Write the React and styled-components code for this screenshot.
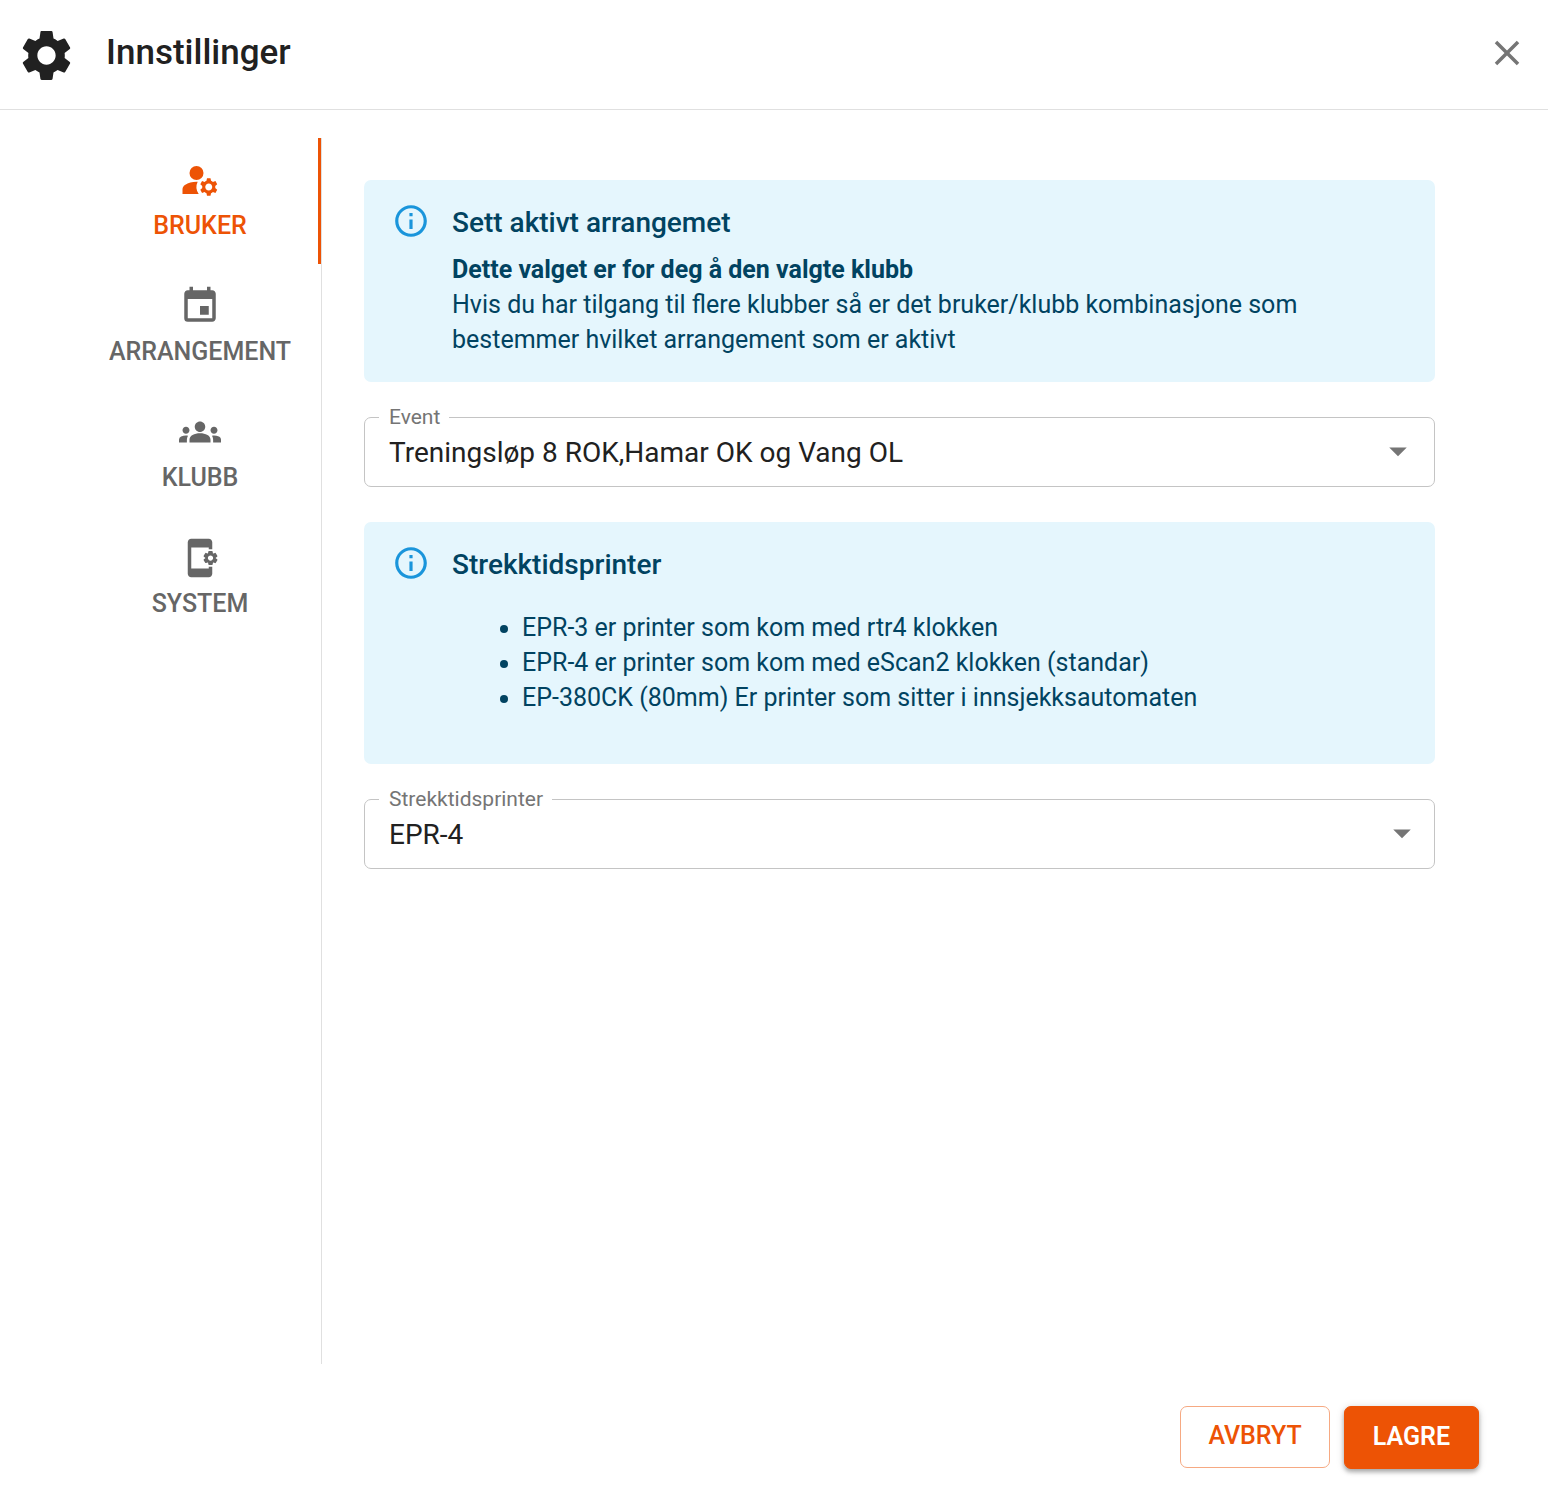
import React, { useState } from "react";
import styled, { createGlobalStyle } from "styled-components";
import {
  MdAppSettingsAlt,
  MdArrowDropDown,
  MdClose,
  MdEvent,
  MdGroups,
  MdInfoOutline,
  MdManageAccounts,
  MdSettings,
} from "react-icons/md";

const GlobalStyle = createGlobalStyle`
  *, *::before, *::after { box-sizing: border-box; }
  body {
    margin: 0;
    background: #fff;
    color: #212121;
    font-family: Roboto, "Liberation Sans", sans-serif;
    font-size: 25px;
    line-height: 35px;
  }
  button, select { font-family: inherit; }
`;

const Dialog = styled.div`
  display: flex;
  flex-direction: column;
  min-height: 100vh;
`;

const Header = styled.header`
  display: flex;
  align-items: center;
  height: 110px;
  padding: 0 20px 3px 16px;
  border-bottom: 1px solid #e0e0e0;
`;

const HeaderIcon = styled(MdSettings)`
  flex: none;
  margin-top: 5px;
  font-size: 61px;
`;

const Title = styled.h1`
  flex: 1;
  margin: 0 0 0 29px;
  font-size: 35px;
  font-weight: 500;
  line-height: 56px;
`;

const CloseButton = styled.button`
  display: flex;
  padding: 0;
  border: 0;
  background: none;
  color: #757575;
  font-size: 42px;
  cursor: pointer;
`;

const Body = styled.div`
  display: flex;
  flex: 1;
  padding: 28px 113px 0 79px;
`;

const Tabs = styled.nav`
  display: flex;
  flex: none;
  flex-direction: column;
  width: 243px;
  border-right: 1px solid #e0e0e0;
`;

const Tab = styled.button`
  display: flex;
  flex-direction: column;
  align-items: center;
  gap: 10px;
  height: 126px;
  padding: 21px 0;
  border: 0;
  background: none;
  box-shadow: ${({ $active }) => ($active ? "inset -3px 0 #ed5305" : "none")};
  color: ${({ $active }) => ($active ? "#ed5305" : "#666")};
  font-size: 25px;
  font-weight: 500;
  line-height: 30px;
  text-transform: uppercase;
  cursor: pointer;

  svg { font-size: 42px; }
`;

const Panel = styled.main`
  display: flex;
  flex: 1;
  flex-direction: column;
  gap: 35px;
  min-width: 0;
  padding: 42px 0 42px 42px;
`;

const Alert = styled.section`
  display: flex;
  gap: 22px;
  padding: 21px 28px 25px;
  border-radius: 7px;
  background: #e5f6fd;
  color: #014361;
`;

const AlertIcon = styled(MdInfoOutline)`
  flex: none;
  margin-top: 1px;
  color: #1a95db;
  font-size: 38px;
`;

const AlertTitle = styled.h2`
  margin: 0 0 7px;
  font-size: 28px;
  font-weight: 500;
  line-height: 44px;
`;

const AlertText = styled.p`
  margin: 0;
`;

const AlertList = styled.ul`
  margin: 24px 0;
  padding-left: 70px;

  ${AlertTitle} + & { margin-top: 23px; }
`;

const Field = styled.fieldset`
  position: relative;
  min-width: 0;
  margin: 0;
  padding: 0;
  border: 1px solid #c4c4c4;
  border-radius: 7px;
  color: #757575;

  svg {
    position: absolute;
    top: 12px;
    right: ${({ $inset }) => $inset}px;
    font-size: 42px;
    pointer-events: none;
  }
`;

const Legend = styled.legend`
  height: 1px;
  margin-left: 14px;
  padding: 0 9px 0 10px;
  color: #757575;
  font-size: 21px;
  line-height: 1px;
`;

const Select = styled.select`
  display: block;
  width: 100%;
  height: 68px;
  padding: 0 68px 0 24px;
  border: 0;
  background: none;
  color: #212121;
  font-size: 28px;
  appearance: none;
`;

const Footer = styled.footer`
  display: flex;
  justify-content: flex-end;
  align-items: flex-start;
  gap: 14px;
  padding: 42px 69px 16px;
`;

const Button = styled.button`
  padding: 0 ${({ $filled }) => ($filled ? 28 : 27)}px 2px;
  border: 1px solid ${({ $filled }) => ($filled ? "#ed5305" : "#f6a982")};
  border-radius: 7px;
  background: ${({ $filled }) => ($filled ? "#ed5305" : "transparent")};
  box-shadow: ${({ $filled }) =>
    $filled ? "0 3px 4px rgba(0, 0, 0, 0.28), 0 1px 8px rgba(0, 0, 0, 0.14)" : "none"};
  color: ${({ $filled }) => ($filled ? "#fff" : "#ed5305")};
  font-size: 25px;
  font-weight: ${({ $filled }) => ($filled ? 600 : 500)};
  line-height: ${({ $filled }) => ($filled ? 59 : 58)}px;
  text-transform: uppercase;
  cursor: pointer;
`;

const tabs = [
  { label: "Bruker", Icon: MdManageAccounts },
  { label: "Arrangement", Icon: MdEvent },
  { label: "Klubb", Icon: MdGroups },
  { label: "System", Icon: MdAppSettingsAlt },
];

function InfoAlert({ title, children }) {
  return (
    <Alert>
      <AlertIcon aria-hidden="true" />
      <div>
        <AlertTitle>{title}</AlertTitle>
        {children}
      </div>
    </Alert>
  );
}

function SelectField({ id, label, options, inset }) {
  return (
    <Field $inset={inset}>
      <Legend>
        <label htmlFor={id}>{label}</label>
      </Legend>
      <Select id={id}>
        {options.map((option) => (
          <option key={option}>{option}</option>
        ))}
      </Select>
      <MdArrowDropDown aria-hidden="true" />
    </Field>
  );
}

export default function App() {
  const [active, setActive] = useState("Bruker");

  return (
    <>
      <GlobalStyle />
      <Dialog>
        <Header>
          <HeaderIcon aria-hidden="true" />
          <Title>Innstillinger</Title>
          <CloseButton type="button" aria-label="Lukk">
            <MdClose />
          </CloseButton>
        </Header>
        <Body>
          <Tabs>
            {tabs.map(({ label, Icon }) => (
              <Tab
                key={label}
                type="button"
                $active={label === active}
                onClick={() => setActive(label)}
              >
                <Icon aria-hidden="true" />
                {label}
              </Tab>
            ))}
          </Tabs>
          <Panel>
            <InfoAlert title="Sett aktivt arrangemet">
              <AlertText>
                <strong>Dette valget er for deg å den valgte klubb</strong>
                <br />
                Hvis du har tilgang til flere klubber så er det bruker/klubb
                kombinasjone som bestemmer hvilket arrangement som er aktivt
              </AlertText>
            </InfoAlert>
            <SelectField
              id="event"
              label="Event"
              inset={15}
              options={["Treningsløp 8 ROK,Hamar OK og Vang OL"]}
            />
            <InfoAlert title="Strekktidsprinter">
              <AlertList>
                <li>EPR-3 er printer som kom med rtr4 klokken</li>
                <li>EPR-4 er printer som kom med eScan2 klokken (standar)</li>
                <li>EP-380CK (80mm) Er printer som sitter i innsjekksautomaten</li>
              </AlertList>
            </InfoAlert>
            <SelectField
              id="printer"
              label="Strekktidsprinter"
              inset={11}
              options={["EPR-4"]}
            />
          </Panel>
        </Body>
        <Footer>
          <Button type="button">Avbryt</Button>
          <Button type="button" $filled>
            Lagre
          </Button>
        </Footer>
      </Dialog>
    </>
  );
}
